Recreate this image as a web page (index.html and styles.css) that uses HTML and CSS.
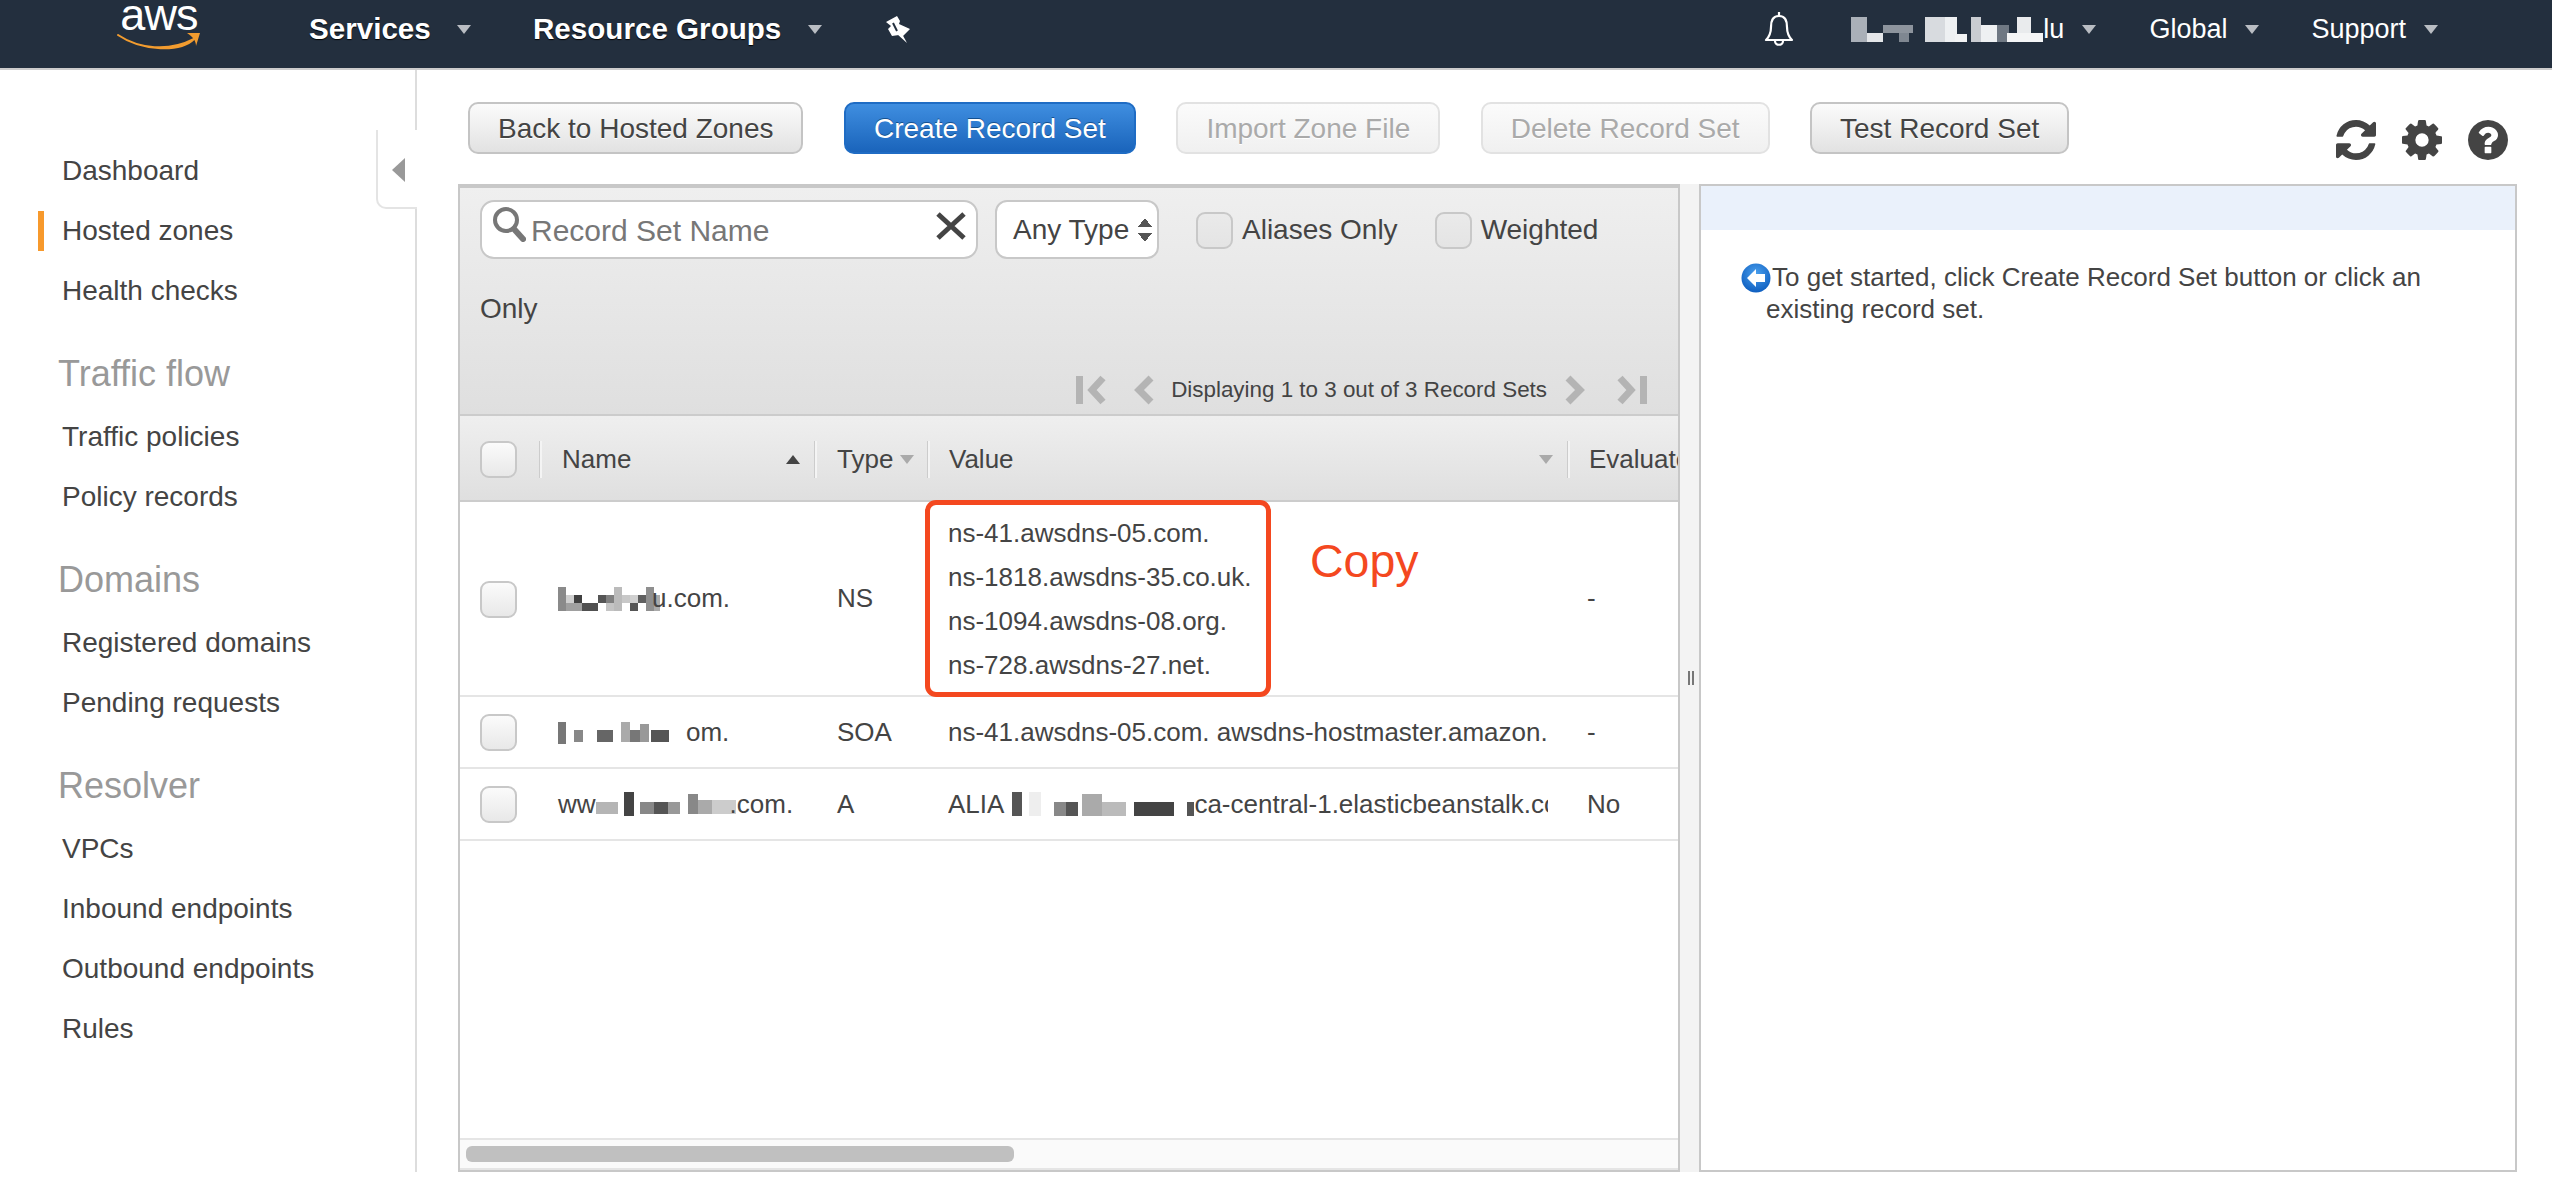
FILE: index.html
```html
<!DOCTYPE html>
<html lang="en">
<head>
  <meta charset="UTF-8" />
  <meta name="viewport" content="width=device-width, initial-scale=1" />
  <title>Route 53 Hosted Zone</title>
  <link rel="stylesheet" href="styles.css">
</head>
<body>

  <header class="topbar">
    <a class="brand">
      <span class="brand-name">aws</span>
      <svg class="brand-smile" viewBox="0 0 84 20" width="84" height="20">
        <path d="M1 3C22 17 52 20 77 7C64 20 26 20 1 3Z" fill="#f29c2f" stroke="#f29c2f" stroke-width="2" stroke-linejoin="round"/>
        <path d="M70 1L83 1L79 14C79 9 76 5 70 1Z" fill="#f29c2f"/>
      </svg>
    </a>
    <div class="menu menu-services">Services <i class="caret"></i></div>
    <div class="menu menu-groups">Resource Groups <i class="caret"></i></div>
    <svg class="pin" viewBox="26 8 26 29" width="26" height="29">
      <path d="M27 15L38 9L41 14L40 17L51 22L44 29L40 28L33 29L29 22L32 19Z" fill="#fff"/>
      <path d="M38 27L48 36L42 25Z" fill="#fff"/>
      <path d="M34 16L38 24" stroke="#232f3e" stroke-width="2"/>
    </svg>

    <div class="topbar-right">
      <svg class="bell" viewBox="0 0 32 36" width="32" height="36">
        <path d="M16 5C9 5 8 11 8 16C8 22 6 26 3 29H29C26 26 24 22 24 16C24 11 23 5 16 5Z" fill="none" stroke="#fff" stroke-width="2.2" stroke-linejoin="round"/>
        <path d="M16 1V5M12 30C12 35 20 35 20 30" fill="none" stroke="#fff" stroke-width="2.2"/>
      </svg>
      <div class="menu-small menu-user">
        <svg class="mosaic" viewBox="0 0 192 25" width="192" height="25">
          <rect x="0" y="0" width="16" height="25" fill="#aab0b8"/><rect x="16" y="16" width="16" height="9" fill="#e4e6e9"/>
          <rect x="32" y="8" width="30" height="8" fill="#8d949d"/><rect x="48" y="16" width="10" height="9" fill="#7f8791"/>
          <rect x="74" y="0" width="20" height="25" fill="#d8dbdf"/><rect x="94" y="0" width="12" height="25" fill="#eef0f2"/>
          <rect x="104" y="17" width="12" height="8" fill="#f2f3f4"/>
          <rect x="120" y="0" width="10" height="25" fill="#c9ccd1"/><rect x="130" y="8" width="16" height="17" fill="#eef0f2"/>
          <rect x="146" y="8" width="12" height="17" fill="#6f7883"/>
          <rect x="166" y="0" width="14" height="16" fill="#e9ebed"/><rect x="156" y="16" width="36" height="9" fill="#f4f5f6"/>
        </svg>
        <span>lu</span> <i class="caret"></i>
      </div>
      <div class="menu-small menu-global">Global <i class="caret"></i></div>
      <div class="menu-small menu-support">Support <i class="caret"></i></div>
    </div>
  </header>

  <main class="layout">
    <aside class="sidebar">
      <button class="collapse-tab" aria-label="Collapse"><i></i></button>
      <ul class="side-list">
        <li>Dashboard</li>
        <li class="active">Hosted zones</li>
        <li>Health checks</li>
      </ul>
      <h3>Traffic flow</h3>
      <ul class="side-list">
        <li>Traffic policies</li>
        <li>Policy records</li>
      </ul>
      <h3>Domains</h3>
      <ul class="side-list">
        <li>Registered domains</li>
        <li>Pending requests</li>
      </ul>
      <h3>Resolver</h3>
      <ul class="side-list">
        <li>VPCs</li>
        <li>Inbound endpoints</li>
        <li>Outbound endpoints</li>
        <li>Rules</li>
      </ul>
    </aside>

    <section class="content">
      <div class="toolbar">
        <button class="btn">Back to Hosted Zones</button>
        <button class="btn btn-primary">Create Record Set</button>
        <button class="btn btn-disabled">Import Zone File</button>
        <button class="btn btn-disabled">Delete Record Set</button>
        <button class="btn">Test Record Set</button>
        <div class="tool-icons">
          <svg viewBox="128 128 1536 1536" width="40" height="40"><path d="M1639 1056q0 5-1 7-64 268-268 434.5t-478 166.5q-146 0-282.5-55t-243.5-157l-129 129q-19 19-45 19t-45-19-19-45v-448q0-26 19-45t45-19h448q26 0 45 19t19 45-19 45l-137 137q71 66 161 102t187 36q134 0 250-65t186-179q11-17 53-117 8-23 30-23h192q13 0 22.5 9.5t9.5 22.5zm25-800v448q0 26-19 45t-45 19h-448q-26 0-45-19t-19-45 19-45l138-138q-148-137-349-137-134 0-250 65t-186 179q-11 17-53 117-8 23-30 23h-199q-13 0-22.5-9.5t-9.5-22.5v-7q65-268 270-434.5t480-166.5q146 0 284 55.5t245 156.5l130-129q19-19 45-19t45 19 19 45z"/></svg>
          <svg viewBox="128 128 1536 1536" width="40" height="40"><path d="M1152 896q0-106-75-181t-181-75-181 75-75 181 75 181 181 75 181-75 75-181zm512-109v222q0 12-8 23t-20 13l-185 28q-19 54-39 91 35 50 107 138 10 12 10 25t-9 23q-27 37-99 108t-94 71q-12 0-26-9l-138-108q-44 23-91 38-16 136-29 186-7 28-36 28h-222q-14 0-24.5-8.5t-11.5-21.5l-28-184q-49-16-90-37l-141 107q-10 9-25 9-14 0-25-11-126-114-165-168-7-10-7-23 0-12 8-23 15-21 51-66.5t54-70.5q-27-50-41-99l-183-27q-13-2-21-12.5t-8-23.5v-222q0-12 8-23t19-13l186-28q14-46 39-92-40-57-107-138-10-12-10-24 0-10 9-23 26-36 98.5-107.5t94.5-71.5q13 0 26 10l138 107q44-23 91-38 16-136 29-186 7-28 36-28h222q14 0 24.5 8.5t11.5 21.5l28 184q49 16 90 37l142-107q9-9 24-9 13 0 25 10 129 119 165 170 7 8 7 22 0 12-8 23-15 21-51 66.5t-54 70.5q26 50 41 98l183 28q13 2 21 12.5t8 23.5z"/></svg>
          <svg viewBox="128 128 1536 1536" width="40" height="40"><path d="M1024 1376v-192q0-14-9-23t-23-9h-192q-14 0-23 9t-9 23v192q0 14 9 23t23 9h192q14 0 23-9t9-23zm256-672q0-88-55.5-163t-138.5-116-170-41q-243 0-371 213-15 24 8 42l132 100q7 6 19 6 16 0 25-12 53-68 86-92 34-24 86-24 48 0 85.5 26t37.5 59q0 38-20 61t-68 45q-63 28-115.5 86.5t-52.5 125.5v36q0 14 9 23t23 9h192q14 0 23-9t9-23q0-19 21.5-49.5t54.5-49.5q32-18 49-28.5t46-35 44.5-48 28-60.5 12.5-81zm384 192q0 209-103 385.5t-279.5 279.5-385.5 103-385.5-103-279.5-279.5-103-385.5 103-385.5 279.5-279.5 385.5-103 385.5 103 279.5 279.5 103 385.5z"/></svg>
        </div>
      </div>

      <div class="panels">
        <div class="grid-panel">
          <div class="filter-bar">
            <div class="filter-row">
              <div class="search-box">
                <svg class="search-icon" viewBox="0 0 34 36" width="34" height="36">
                  <circle cx="14" cy="14" r="11" fill="none" stroke="#777" stroke-width="4"/>
                  <path d="M22 23L31 33" stroke="#777" stroke-width="6" stroke-linecap="round"/>
                </svg>
                <span class="placeholder">Record Set Name</span>
                <svg class="clear-icon" viewBox="0 0 30 28" width="30" height="28">
                  <path d="M2 2L28 26M28 2L2 26" stroke="#444" stroke-width="5"/>
                </svg>
              </div>
              <div class="type-select">Any Type <i class="updown"></i></div>
              <label class="check-label"><span class="check"></span>Aliases Only</label>
              <label class="check-label"><span class="check"></span>Weighted</label>
            </div>
            <div class="wrapped-label">Only</div>
            <div class="pager">
              <svg viewBox="0 0 32 30" width="32" height="30"><path d="M1 1H8V29H1Z" fill="#b4b4b4"/><path d="M28 3L17 15L28 27" fill="none" stroke="#b4b4b4" stroke-width="7"/></svg>
              <svg class="pager-prev" viewBox="0 0 22 30" width="22" height="30"><path d="M19 3L7 15L19 27" fill="none" stroke="#b4b4b4" stroke-width="7"/></svg>
              <span class="pager-text">Displaying 1 to 3 out of 3 Record Sets</span>
              <svg class="pager-next" viewBox="0 0 22 30" width="22" height="30"><path d="M3 3L15 15L3 27" fill="none" stroke="#b4b4b4" stroke-width="7"/></svg>
              <svg class="pager-last" viewBox="0 0 32 30" width="32" height="30"><path d="M24 1H31V29H24Z" fill="#b4b4b4"/><path d="M4 3L15 15L4 27" fill="none" stroke="#b4b4b4" stroke-width="7"/></svg>
            </div>
          </div>

          <div class="table-wrap">
            <table class="records">
              <colgroup>
                <col class="col-check"><col class="col-name"><col class="col-type"><col class="col-value"><col class="col-eval">
              </colgroup>
              <thead>
                <tr>
                  <th><span class="check"></span></th>
                  <th><div class="th-inner">Name <i class="sort sort-up"></i></div></th>
                  <th><div class="th-inner th-tight">Type <i class="sort"></i></div></th>
                  <th><div class="th-inner">Value <i class="sort"></i></div></th>
                  <th><div class="th-inner">Evaluate Target Health</div></th>
                </tr>
              </thead>
              <tbody>
                <tr class="row-tall">
                  <td><span class="check"></span></td>
                  <td><div class="name-cell">
                    <svg class="mosaic mosaic-name" viewBox="0 0 102 24" width="102" height="24">
                      <rect x="0" y="0" width="8" height="24" fill="#8a8a8a"/><rect x="8" y="8" width="16" height="16" fill="#a0a0a0"/><rect x="8" y="8" width="8" height="8" fill="#cfcfcf"/>
                      <rect x="16" y="8" width="8" height="8" fill="#404040"/><rect x="24" y="16" width="16" height="8" fill="#505050"/>
                      <rect x="40" y="8" width="8" height="8" fill="#555"/><rect x="48" y="8" width="8" height="8" fill="#808080"/><rect x="48" y="16" width="8" height="8" fill="#c4c4c4"/>
                      <rect x="56" y="0" width="8" height="24" fill="#bbb"/><rect x="64" y="8" width="8" height="8" fill="#c8c8c8"/><rect x="72" y="8" width="8" height="8" fill="#d0d0d0"/>
                      <rect x="72" y="16" width="8" height="8" fill="#555"/><rect x="80" y="8" width="8" height="8" fill="#606060"/><rect x="88" y="0" width="8" height="24" fill="#8f8f8f"/><rect x="96" y="8" width="6" height="16" fill="#aaa"/>
                    </svg><span>u.com.</span>
                  </div></td>
                  <td>NS</td>
                  <td class="value-lines">
                    <div>ns-41.awsdns-05.com.</div>
                    <div>ns-1818.awsdns-35.co.uk.</div>
                    <div>ns-1094.awsdns-08.org.</div>
                    <div>ns-728.awsdns-27.net.</div>
                  </td>
                  <td>-</td>
                </tr>
                <tr>
                  <td><span class="check"></span></td>
                  <td><div class="name-cell">
                    <svg class="mosaic mosaic-soa" viewBox="0 0 128 24" width="128" height="24">
                      <rect x="0" y="2" width="8" height="22" fill="#777"/><rect x="16" y="10" width="9" height="12" fill="#888"/><rect x="39" y="10" width="16" height="12" fill="#666"/>
                      <rect x="63" y="2" width="9" height="20" fill="#aaa"/><rect x="72" y="10" width="10" height="12" fill="#777"/><rect x="82" y="4" width="9" height="18" fill="#999"/><rect x="93" y="10" width="18" height="12" fill="#555"/>
                    </svg><span>om.</span>
                  </div></td>
                  <td>SOA</td>
                  <td><div class="value-clip">ns-41.awsdns-05.com. awsdns-hostmaster.amazon.</div></td>
                  <td>-</td>
                </tr>
                <tr>
                  <td><span class="check"></span></td>
                  <td><div class="name-cell">
                    <span>ww</span>
                    <svg class="mosaic mosaic-www" viewBox="0 0 140 24" width="140" height="24">
                      <rect x="0" y="10" width="22" height="12" fill="#b5b5b5"/><rect x="28" y="0" width="10" height="24" fill="#444"/><rect x="44" y="10" width="14" height="12" fill="#888"/>
                      <rect x="58" y="10" width="14" height="12" fill="#555"/><rect x="72" y="10" width="12" height="12" fill="#999"/><rect x="92" y="2" width="10" height="20" fill="#888"/><rect x="102" y="8" width="14" height="14" fill="#aaa"/><rect x="116" y="8" width="24" height="14" fill="#ccc"/>
                    </svg><span>.com.</span>
                  </div></td>
                  <td>A</td>
                  <td><div class="value-clip value-flex">
                    <span>ALIA</span>
                    <svg class="mosaic" viewBox="0 0 190 24" width="190" height="24">
                      <rect x="8" y="0" width="10" height="24" fill="#555"/><rect x="25" y="0" width="12" height="24" fill="#eee"/><rect x="50" y="10" width="12" height="14" fill="#888"/><rect x="62" y="10" width="12" height="14" fill="#555"/>
                      <rect x="78" y="2" width="20" height="22" fill="#aaa"/><rect x="98" y="10" width="24" height="14" fill="#bbb"/><rect x="130" y="10" width="40" height="14" fill="#444"/><rect x="183" y="10" width="7" height="14" fill="#555"/>
                    </svg><span>ca-central-1.elasticbeanstalk.com</span>
                  </div></td>
                  <td>No</td>
                </tr>
              </tbody>
            </table>
          </div>

          <div class="scrollbar"><div class="scroll-thumb"></div></div>

          <div class="callout"></div>
          <div class="callout-label">Copy</div>
        </div>

        <div class="splitter"><i></i></div>

        <div class="detail-panel">
          <div class="detail-head"></div>
          <p class="detail-hint">
            <svg class="hint-icon" viewBox="0 0 30 30" width="30" height="30">
              <defs>
                <radialGradient id="hintBlue" cx="50%" cy="35%" r="65%">
                  <stop offset="0" stop-color="#4aa0ee"/>
                  <stop offset="1" stop-color="#0f5fc0"/>
                </radialGradient>
              </defs>
              <circle cx="15" cy="15" r="14.5" fill="url(#hintBlue)"/>
              <path d="M15 6L6 15L15 24V19H24V11H15Z" fill="#fff"/>
            </svg>To get started, click Create Record Set button or click an existing record set.
          </p>
        </div>
      </div>
    </section>
  </main>

</body>
</html>
```

FILE: styles.css
```css
* {
  box-sizing: border-box;
}

html, body {
  margin: 0;
  height: 100%;
  overflow: hidden;
}

body {
  font-family: "Liberation Sans", Arial, sans-serif;
  color: #444;
  background: #fff;
}

/* top bar */
.topbar {
  display: flex;
  align-items: center;
  height: 70px;
  padding: 0 114px 10px 117px;
  background: #232f3e;
  border-bottom: 2px solid #ccc;
  color: #fff;
}

.brand {
  display: flex;
  flex-direction: column;
  align-items: center;
  width: 84px;
  height: 60px;
  margin-right: 108px;
}

.brand-name {
  font-size: 45px;
  line-height: 32px;
  letter-spacing: -0.8px;
}

.brand-smile {
  margin-top: 1px;
  flex: none;
}

.menu {
  display: flex;
  align-items: center;
  gap: 18px;
  font-size: 29.6px;
  font-weight: 700;
  text-shadow: 0 1px 1px #000;
  white-space: pre;
}

.menu-services {
  margin-right: 62px;
}

.menu-groups {
  margin-right: 63px;
}

.caret {
  display: inline-block;
  width: 0;
  height: 0;
  border-left: 7px solid transparent;
  border-right: 7px solid transparent;
  border-top: 9px solid #b9bdc3;
}

.topbar-right {
  display: flex;
  align-items: center;
  margin-left: auto;
}

.bell {
  margin-right: 56px;
}

.menu-small {
  display: flex;
  align-items: center;
  gap: 18px;
  font-size: 27px;
  white-space: nowrap;
}

.menu-user {
  gap: 0;
}

.menu-user .caret {
  margin-left: 18px;
}

.menu-global {
  margin-left: 53px;
}

.menu-support {
  margin-left: 52px;
}

/* page columns */
.layout {
  display: flex;
  height: 1102px;
}

.sidebar {
  position: relative;
  flex: none;
  width: 417px;
  padding-top: 71px;
  border-right: 2px solid #ddd;
}

.collapse-tab {
  position: absolute;
  top: 60px;
  right: -2px;
  width: 41px;
  height: 79px;
  padding: 3px 0 0;
  background: #fff;
  border: 2px solid #e4e4e4;
  border-right: 0;
  border-top: 0;
  border-radius: 0 0 0 10px;
}

.collapse-tab i {
  display: block;
  width: 0;
  height: 0;
  margin-left: 14px;
  border-top: 12px solid transparent;
  border-bottom: 12px solid transparent;
  border-right: 13px solid #999;
}

.side-list {
  list-style: none;
  margin: 0;
  padding: 0;
}

.side-list li {
  height: 60px;
  line-height: 60px;
  padding-left: 62px;
  font-size: 28px;
  color: #444;
}

.side-list .active {
  background: linear-gradient(#f7992c, #f7992c) 38px center / 6px 40px no-repeat;
}

.sidebar h3 {
  margin: 23px 0 3px;
  height: 60px;
  line-height: 60px;
  padding-left: 58px;
  font-size: 36px;
  font-weight: 400;
  color: #999;
}

.content {
  flex: 1;
  min-width: 0;
  padding: 32px 35px 0 41px;
  display: flex;
  flex-direction: column;
}

/* action buttons */
.toolbar {
  display: flex;
  align-items: flex-start;
  gap: 40.5px;
  height: 52px;
  margin: 0 0 30px 10px;
}

.btn {
  height: 52px;
  padding: 2px 28px 0;
  font-family: inherit;
  font-size: 28px;
  color: #444;
  background: linear-gradient(#fbfbfb, #e2e2e2);
  border: 2px solid #c4c4c4;
  border-radius: 10px;
  text-shadow: 0 1px 0 #fff;
  white-space: nowrap;
}

.btn-primary {
  color: #fff;
  background: linear-gradient(#3f8ee0, #1a64bb);
  border-color: #1f6cc4;
  text-shadow: 0 -1px 0 #14508f;
}

.btn-disabled {
  color: #aaa;
  background: linear-gradient(#fbfbfb, #f0f0f0);
  border-color: #e2e2e2;
}

.tool-icons {
  display: flex;
  gap: 26px;
  margin: 18px 9px 0 auto;
}

.tool-icons svg {
  fill: #444;
}

/* main panels */
.panels {
  flex: 1;
  display: flex;
  min-height: 0;
  height: 988px;
}

.grid-panel {
  position: relative;
  flex: none;
  width: 1222px;
  display: flex;
  flex-direction: column;
  border: 2px solid #c8c8c8;
  border-top-width: 4px;
  overflow: hidden;
}

.filter-bar {
  flex: none;
  height: 228px;
  padding: 12px 0 0 20px;
  background: linear-gradient(#efefef, #dfdfdf);
  border-bottom: 2px solid #ccc;
}

.filter-row {
  display: flex;
  align-items: flex-start;
  font-size: 28px;
}

.search-box {
  display: flex;
  align-items: center;
  width: 498px;
  height: 59px;
  padding: 0 10px;
  background: #fff;
  border: 2px solid #c8c8c8;
  border-radius: 14px;
}

.search-icon {
  flex: none;
  margin: -12px 5px 0 0;
}

.placeholder {
  flex: 1;
  font-size: 30px;
  color: #777;
  margin-top: 3px;
}

.clear-icon {
  margin-top: -8px;
}

.type-select {
  display: flex;
  align-items: center;
  width: 164px;
  height: 59px;
  margin-left: 17px;
  padding: 0 0 0 16px;
  background: #fff;
  border: 2px solid #c8c8c8;
  border-radius: 12px;
  white-space: nowrap;
}

.updown {
  position: relative;
  width: 14px;
  height: 24px;
  margin-left: 9px;
  background:
    linear-gradient(to bottom right, transparent 50%, #555 50%) 0 0 / 7px 9px no-repeat,
    linear-gradient(to bottom left, transparent 50%, #555 50%) 7px 0 / 7px 9px no-repeat,
    linear-gradient(to top right, transparent 50%, #555 50%) 0 15px / 7px 9px no-repeat,
    linear-gradient(to top left, transparent 50%, #555 50%) 7px 15px / 7px 9px no-repeat;
}

.check-label {
  display: flex;
  align-items: center;
  gap: 9px;
  height: 60px;
  margin-left: 37px;
  white-space: nowrap;
}

.check {
  display: inline-block;
  flex: none;
  width: 37px;
  height: 37px;
  background: linear-gradient(#fbfbfb, #e8e8e8);
  border: 2px solid #c8c8c8;
  border-radius: 9px;
}

.check-label .check {
  background: linear-gradient(#eaeaea, #e4e4e4);
}

.wrapped-label {
  height: 30px;
  margin-top: 34px;
  font-size: 28px;
  line-height: 30px;
}

.pager {
  display: flex;
  align-items: center;
  justify-content: flex-end;
  height: 30px;
  margin-top: 51px;
  padding-right: 30px;
  font-size: 22.4px;
}

.pager-prev {
  margin: 0 17px 0 25px;
}

.pager-next {
  margin: 0 29px 0 18px;
}

.table-wrap {
  flex: 1;
  min-height: 0;
  overflow: hidden;
}

.records {
  table-layout: fixed;
  width: 1308px;
  border-collapse: separate;
  border-spacing: 0;
  font-size: 26px;
}

.col-check { width: 80px; }
.col-name { width: 275px; }
.col-type { width: 113px; }
.col-value { width: 640px; }
.col-eval { width: 200px; }

.records th {
  height: 86px;
  padding: 2px 0 0;
  font-weight: 400;
  text-align: left;
  background: linear-gradient(#efefef, #dfdfdf);
  border-bottom: 2px solid #ccc;
}

.records th:first-child,
.records td:first-child {
  padding-left: 20px;
}

.th-inner {
  display: flex;
  align-items: center;
  justify-content: space-between;
  height: 37px;
  padding: 0 15px 0 20px;
  border-left: 2px solid #f4f4f4;
  box-shadow: -1px 0 0 #ccc;
  white-space: nowrap;
}

.records th:nth-child(4) .th-inner,
.records th:nth-child(5) .th-inner {
  padding-left: 19px;
}

.th-tight {
  padding-right: 14px;
}

.sort {
  width: 0;
  height: 0;
  border-left: 7px solid transparent;
  border-right: 7px solid transparent;
  border-top: 9px solid #aaa;
}

.sort-up {
  border-top: 0;
  border-bottom: 9px solid #444;
}

.records td {
  height: 72px;
  padding: 0 0 0 22px;
  border-bottom: 2px solid #e5e5e5;
  white-space: nowrap;
  overflow: hidden;
}

.records td:nth-child(4) {
  padding-left: 20px;
}

.records td:nth-child(5) {
  padding-left: 19px;
}

.records td:first-child {
  padding-top: 1px;
}

.row-tall td {
  height: 195px;
}

.records .check {
  display: block;
}

.value-lines div {
  line-height: 44px;
}

.name-cell {
  display: flex;
  align-items: center;
  margin-left: -4px;
}

.mosaic {
  flex: none;
}

.mosaic-name {
  margin-right: -8px;
}

.mosaic-www {
  margin-right: -6px;
}

.value-clip {
  width: 600px;
  overflow: hidden;
  white-space: nowrap;
}

.value-flex {
  display: flex;
  align-items: center;
}

.scrollbar {
  flex: none;
  height: 32px;
  padding: 6px 0 0 6px;
  background: #fafafa;
  border-top: 2px solid #e5e5e5;
  border-bottom: 2px solid #e5e5e5;
}

.scroll-thumb {
  width: 548px;
  height: 16px;
  background: #c0c0c0;
  border-radius: 6px;
}

/* red annotation over the value column */
.callout {
  position: absolute;
  top: 312px;
  left: 465px;
  width: 346px;
  height: 197px;
  border: 5px solid #f4481f;
  border-radius: 11px;
}

.callout-label {
  position: absolute;
  top: 348px;
  left: 850px;
  font-size: 46.5px;
  line-height: 50px;
  color: #f4481f;
}

.splitter {
  flex: none;
  width: 19px;
  display: flex;
  align-items: center;
  justify-content: center;
  background: #f3f3f3;
}

.splitter i {
  width: 6px;
  height: 14px;
  margin-left: 2px;
  border-left: 2px solid #777;
  border-right: 2px solid #777;
}

.detail-panel {
  flex: 1;
  min-width: 0;
  border: 2px solid #c8c8c8;
}

.detail-head {
  height: 44px;
  background: #eaf1fb;
}

.detail-hint {
  margin: 31px 0 0;
  padding: 0 40px 0 65px;
  font-size: 26px;
  line-height: 32px;
}

.hint-icon {
  vertical-align: -7px;
  margin: 0 1px 0 -25px;
}
```
